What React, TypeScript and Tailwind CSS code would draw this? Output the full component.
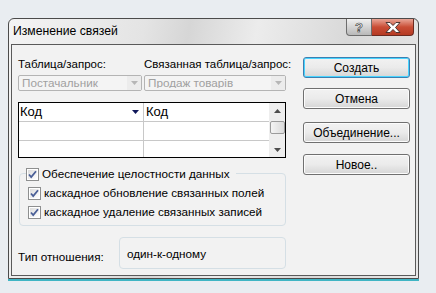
import { type FC, type ReactNode } from "react";

const font = { fontFamily: '"Liberation Sans", Arial, sans-serif' };

const CheckBox: FC = () => (
  <svg width="13" height="13" viewBox="0 0 13 13" className="shrink-0">
    <defs>
      <linearGradient id="cbg" x1="0" y1="0" x2="1" y2="1">
        <stop offset="0" stopColor="#dcdcdc" />
        <stop offset="1" stopColor="#ffffff" />
      </linearGradient>
    </defs>
    <rect x="0.5" y="0.5" width="12" height="12" fill="#fff" stroke="#8e8f8f" />
    <rect x="2" y="2" width="9" height="9" fill="url(#cbg)" />
    <path d="M3 6.5 L5.2 9 L10 3.2" fill="none" stroke="#4a5f97" strokeWidth="1.8" />
  </svg>
);

const Combo: FC<{ text: string; w: string }> = ({ text, w }) => (
  <div
    className={`${w} h-[16px] flex items-center border border-[#b4b4b4] rounded-[2px] bg-[#f4f4f4] text-[11.7px] text-[#a0a0a0] pl-[3px] leading-none`}
  >
    <span className="flex-1 truncate">{text}</span>
    <span className="w-[14px] h-full flex items-center justify-center bg-[#ececec]">
      <svg width="7" height="4" viewBox="0 0 7 4">
        <path d="M0 0 H7 L3.5 4 Z" fill="#b6b6b6" />
      </svg>
    </span>
  </div>
);

const Btn: FC<{ children: ReactNode; focus?: boolean; className?: string }> = ({
  children,
  focus,
  className,
}) => (
  <div
    className={`w-[107px] h-[21px] rounded-[3px] border flex items-center justify-center text-[12px] text-black bg-gradient-to-b from-[#f2f2f2] via-[#ebebeb] to-[#d6d6d6] ${
      focus ? "border-[#3c7fb1] shadow-[inset_0_0_0_1px_#48d4ff]" : "border-[#707070] shadow-[inset_0_0_0_1px_#fcfcfc]"
    } ${className ?? ""}`}
  >
    {children}
  </div>
);

const Arrow: FC<{ up?: boolean; color?: string }> = ({ up, color = "#4d4d4d" }) => (
  <svg width="7" height="4" viewBox="0 0 7 4">
    <path d={up ? "M0 4 H7 L3.5 0 Z" : "M0 0 H7 L3.5 4 Z"} fill={color} />
  </svg>
);

const App: FC = () => {
  return (
    <div className="w-[436px] h-[293px] bg-[#e9edf1] pt-[18px] pl-[8px]" style={font}>
      <div className="w-[411px] h-[261px] rounded-t-[6px] border border-[#4b4b4b] bg-[linear-gradient(100deg,#f4f4f4_0%,#e4e4e4_30%,#d6d6d6_40%,#ececec_55%,#d9d9d9_75%,#e8e8e8_100%)] flex flex-col shadow-[0_2px_0_#3fb5c4]">
        {/* title bar */}
        <div className="h-[25px] flex items-start justify-between pl-[4px] pr-[4px]">
          <div className="pt-[6px] text-[12.2px] text-black leading-none">Изменение связей</div>
          <div className="flex">
            <div className="w-[26px] h-[17px] rounded-bl-[4px] border border-t-0 border-[#6d6d6d] bg-gradient-to-b from-[#f0f0f0] to-[#b9b9b9] flex items-center justify-center">
              <span
                className="text-[13px] font-bold text-white leading-none"
                style={{ WebkitTextStroke: "0.7px #444" }}
              >
                ?
              </span>
            </div>
            <div className="w-[42px] h-[17px] rounded-br-[4px] border border-l-0 border-t-0 border-[#6b2a20] bg-gradient-to-b from-[#e8a597] via-[#c94d35] to-[#b53a23] flex items-center justify-center">
              <svg width="16" height="11" viewBox="0 0 16 11">
                <path
                  d="M1 0.5 H5 L8 3.5 L11 0.5 H15 L10.5 5.5 L15 10.5 H11 L8 7.5 L5 10.5 H1 L5.5 5.5 Z"
                  fill="#ffffff"
                  stroke="#3a2a28"
                  strokeWidth="0.9"
                />
              </svg>
            </div>
          </div>
        </div>

        {/* client */}
        <div className="flex-1 mx-[2px] mb-[2px] border border-[#5a5a5a] bg-[#f2f2f2] flex">
          <div className="w-[287px] pl-[6px] flex flex-col">
            <div className="flex text-[11.5px] text-black leading-none mt-[14px]">
              <span className="w-[126px]">Таблица/запрос:</span>
              <span>Связанная таблица/запрос:</span>
            </div>
            <div className="flex gap-[2px] mt-[4px]">
              <Combo text="Постачальник" w="w-[124px]" />
              <Combo text="Продаж товарів" w="w-[142px]" />
            </div>

            {/* grid */}
            <div className="mt-[11px] w-[268px] h-[56px] border border-black bg-white flex">
              <div className="flex-1 flex flex-col">
                <div className="h-[19px] flex border-b border-[#c8c8c8]">
                  <div className="w-[125px] flex items-center pl-[1px] pr-[4px] border-r border-[#c8c8c8] text-[13px] text-black">
                    <span className="flex-1">Код</span>
                    <Arrow color="#10185a" />
                  </div>
                  <div className="flex-1 flex items-center pl-[2px] text-[13px] text-black">Код</div>
                </div>
                <div className="h-[19px] flex border-b border-[#c8c8c8]">
                  <div className="w-[125px] border-r border-[#c8c8c8]" />
                  <div className="flex-1" />
                </div>
                <div className="flex-1 flex">
                  <div className="w-[125px] border-r border-[#c8c8c8]" />
                  <div className="flex-1" />
                </div>
              </div>
              <div className="w-[16px] bg-[#eeeeee] flex flex-col items-center">
                <div className="h-[16px] flex items-center justify-center">
                  <Arrow up />
                </div>
                <div className="w-[15px] h-[13px] mt-[2px] rounded-[2px] border border-[#9b9b9b] bg-gradient-to-r from-[#f4f4f4] to-[#dadada]" />
                <div className="flex-1" />
                <div className="h-[14px] flex items-center justify-center">
                  <Arrow />
                </div>
              </div>
            </div>

            {/* group box */}
            <div className="mt-[15px] ml-[1px] w-[267px] h-[53px] rounded-[4px] border border-[#d5dfe5] relative flex flex-col pl-[8px] pt-[13px] gap-[6px] text-[11.7px] text-black leading-none">
              <div className="absolute left-[6px] -top-[6px] flex items-center gap-[3px] bg-[#f2f2f2] pr-[7px]">
                <CheckBox />
                <span>Обеспечение целостности данных</span>
              </div>
              <div className="flex items-center gap-[3px]">
                <CheckBox />
                <span>каскадное обновление связанных полей</span>
              </div>
              <div className="flex items-center gap-[3px]">
                <CheckBox />
                <span>каскадное удаление связанных записей</span>
              </div>
            </div>

            {/* relation type */}
            <div className="flex mt-[11px] text-[11.7px] text-black leading-none">
              <span className="w-[101px] pt-[14px]">Тип отношения:</span>
              <div className="w-[167px] h-[32px] rounded-[4px] border border-[#d5dfe5] pl-[7px] pt-[10px]">
                один-к-одному
              </div>
            </div>
          </div>

          {/* buttons */}
          <div className="pl-[4px] pt-[12px] flex flex-col">
            <Btn focus>Создать</Btn>
            <Btn className="mt-[10px]">Отмена</Btn>
            <Btn className="mt-[13px]">Объединение...</Btn>
            <Btn className="mt-[11px]">Новое..</Btn>
          </div>
        </div>
      </div>
    </div>
  );
};

export default App;
